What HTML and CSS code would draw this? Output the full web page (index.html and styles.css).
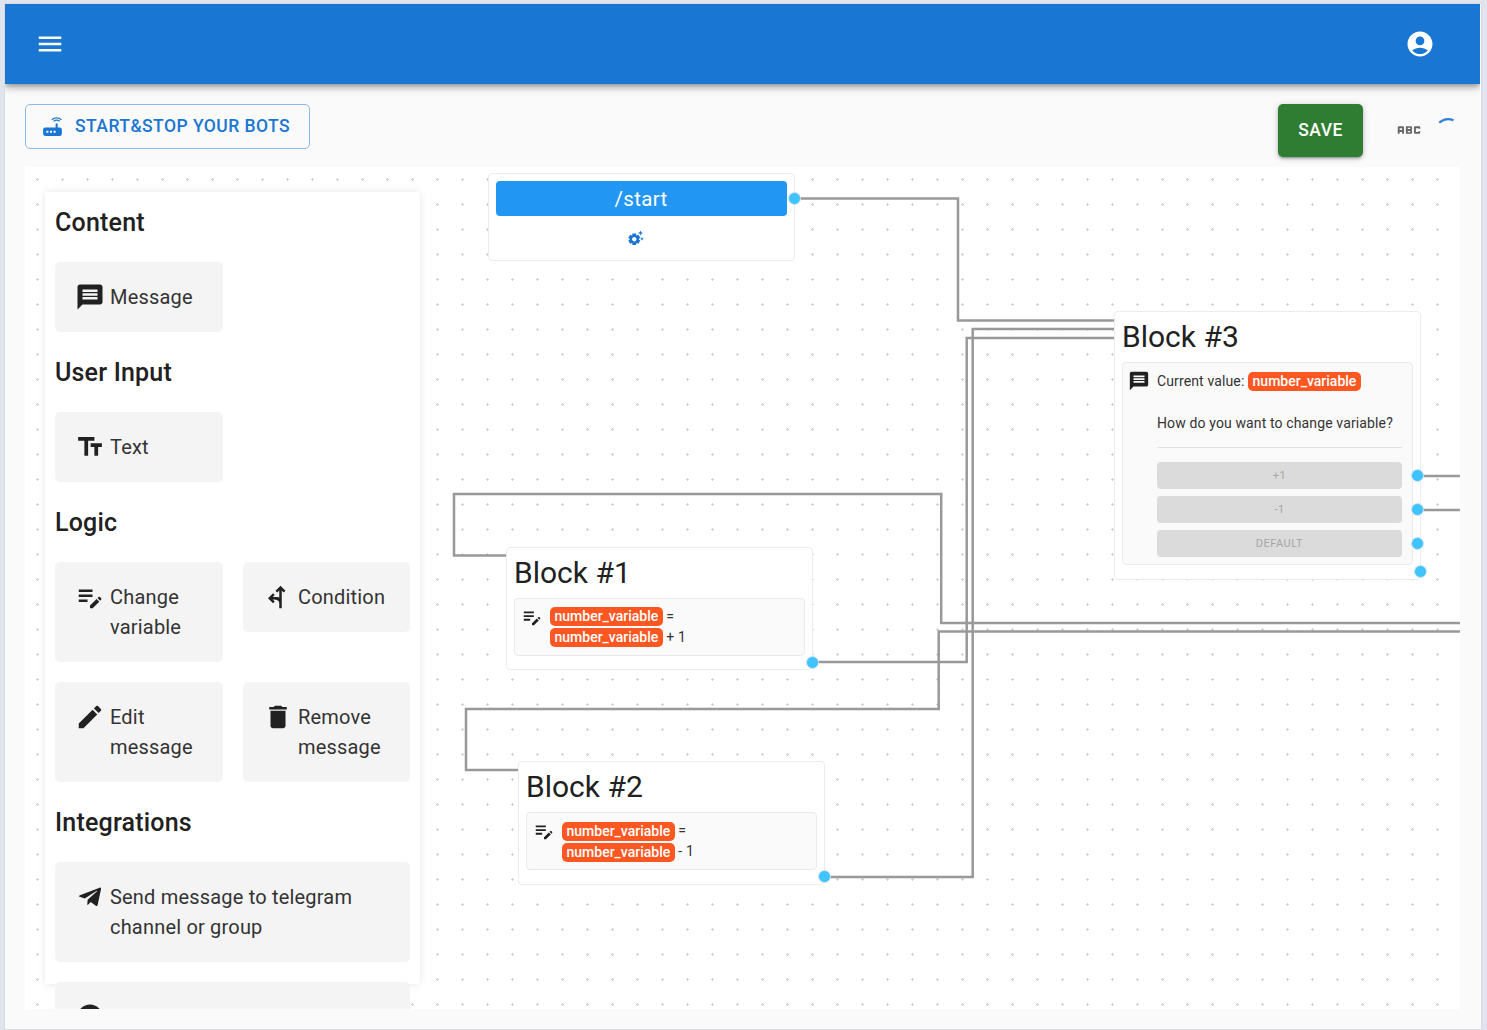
FILE: index.html
```html
<!DOCTYPE html>
<html lang="en">
<head>
<meta charset="utf-8">
<title>Bot editor</title>
<link rel="stylesheet" href="styles.css">
</head>
<body>
<svg class="sprite" aria-hidden="true">
  <symbol id="chat" viewBox="0 0 24 24"><path d="M20 2H4c-1.1 0-1.99.9-1.99 2L2 22l4-4h14c1.1 0 2-.9 2-2V4c0-1.1-.9-2-2-2zm-2 12H6v-2h12v2zm0-3H6V9h12v2zm0-3H6V6h12v2z"/></symbol>
  <symbol id="note" viewBox="0 0 24 24"><path d="M3 10h11v2H3v-2zm0-2h11V6H3v2zm0 8h7v-2H3v2zm15.01-3.13.71-.71c.39-.39 1.02-.39 1.41 0l.71.71c.39.39.39 1.02 0 1.41l-.71.71-2.12-2.12zm-.71.71-5.3 5.3V21h2.12l5.3-5.3-2.12-2.12z"/></symbol>
</svg>
<div class="app">
  <header class="appbar">
    <svg class="icon" viewBox="0 0 24 24"><path d="M3 18h18v-2H3v2zm0-5h18v-2H3v2zm0-7v2h18V6H3z"/></svg>
    <svg class="icon" viewBox="0 0 24 24"><path d="M12 2C6.48 2 2 6.48 2 12s4.48 10 10 10 10-4.48 10-10S17.52 2 12 2zm0 4c1.93 0 3.5 1.57 3.5 3.5S13.93 13 12 13s-3.5-1.57-3.5-3.5S10.07 6 12 6zm0 14c-2.03 0-4.43-.82-6.14-2.88C7.55 15.8 9.68 15 12 15s4.45.8 6.14 2.12C16.43 19.18 14.03 20 12 20z"/></svg>
  </header>
  <div class="toolbar">
    <button class="bots">
      <svg class="icon-router" viewBox="0 0 24 24"><path d="M20.2 5.9l.8-.8C19.6 3.7 17.8 3 16 3s-3.6.7-5 2.1l.8.8C13 4.8 14.5 4.2 16 4.2s3 .6 4.2 1.7zm-.9.8c-.9-.9-2.1-1.4-3.3-1.4s-2.4.5-3.3 1.4l.8.8c.7-.7 1.6-1 2.5-1 .9 0 1.8.3 2.5 1l.8-.8zM19 13h-2V9h-2v4H5c-1.1 0-2 .9-2 2v4c0 1.1.9 2 2 2h14c1.1 0 2-.9 2-2v-4c0-1.1-.9-2-2-2zM8 18H6v-2h2v2zm3.5 0h-2v-2h2v2zm3.5 0h-2v-2h2v2z"/></svg>
      <span>START&amp;STOP YOUR BOTS</span>
    </button>
    <div class="actions">
      <button class="save">SAVE</button>
      <svg class="icon abc" viewBox="0 0 24 24"><path fill-rule="evenodd" d="M21 11h-1.5v-.5h-2v3h2V13H21v1c0 .55-.45 1-1 1h-3c-.55 0-1-.45-1-1v-4c0-.55.45-1 1-1h3c.55 0 1 .45 1 1zM8 10v5H6.5v-1.5h-2V15H3v-5c0-.55.45-1 1-1h3c.55 0 1 .45 1 1zm-1.5.5h-2V12h2zM9.5 9h4c.55 0 1 .45 1 1v1c0 .55-.45 1-1 1 .55 0 1 .45 1 1v1c0 .55-.45 1-1 1h-4zm1.5 1.25v1h2v-1zm0 2.5v1h2v-1z"/></svg>
      <svg class="spinner" viewBox="0 0 30 30"><path d="M7.200 8.700Q14 2.900 21.500 6.300"/></svg>
    </div>
  </div>

  <main class="canvas">
    <svg class="edges" width="1435" height="842" viewBox="25 167 1435 842">
      <defs><pattern id="grid" x="25" y="167" width="25" height="25" patternUnits="userSpaceOnUse"><path d="M12 11h1v1h1v1h-1v1h-1v-1h-1v-1h1z"/></pattern></defs>
      <rect class="dots" x="25" y="167" width="1435" height="842" fill="url(#grid)"/>
      <path d="M795 198.500H958V320.500H1115"/>
      <path d="M813 662H966.700V338H1115"/>
      <path d="M825 877H972.700V329H1115"/>
      <path d="M1460 623H941.200V494H454V555.500H508"/>
      <path d="M1460 631.500H938.700V709H466V770H520"/>
      <path d="M1417 476H1460M1417 510H1460"/>
    </svg>

    <section class="node node-start">
      <div class="command">/start</div>
      <svg class="gear" viewBox="0 0 24 24"><path d="M17.41 6.59 15 5.500l2.410-1.090L18.500 2l1.090 2.410L22 5.500l-2.410 1.090L18.500 9l-1.090-2.410zm3.870 6.130L20.500 11l-.78 1.720-1.720.78 1.720.78.78 1.720.78-1.720L23 13.500l-1.720-.78zm-5.040 1.650 1.940 1.470-2.500 4.330-2.240-.94c-.2.13-.42.26-.64.37l-.3 2.400h-5l-.3-2.410c-.22-.11-.43-.23-.64-.37l-2.240.94-2.500-4.330 1.940-1.470c-.01-.11-.01-.24-.01-.36s0-.25.01-.37l-1.940-1.470 2.500-4.330 2.240.94c.2-.13.42-.26.64-.37L7.500 6h5l.3 2.410c.22.11.43.23.64.37l2.240-.94 2.500 4.330-1.940 1.470c.01.12.01.24.01.37s0 .24-.01.36zM13 14c0-1.660-1.340-3-3-3s-3 1.340-3 3 1.340 3 3 3 3-1.340 3-3z"/></svg>
      <i class="port port-start"></i>
    </section>

    <section class="node node-1">
      <h2>Block #1</h2>
      <div class="step">
        <svg class="step-icon"><use href="#note"/></svg>
        <div class="step-body"><div><span class="chip">number_variable</span> =</div><div><span class="chip">number_variable</span> + 1</div></div>
      </div>
      <i class="port port-end"></i>
    </section>

    <section class="node node-2">
      <h2>Block #2</h2>
      <div class="step">
        <svg class="step-icon"><use href="#note"/></svg>
        <div class="step-body"><div><span class="chip">number_variable</span> =</div><div><span class="chip">number_variable</span> - 1</div></div>
      </div>
      <i class="port port-end"></i>
    </section>

    <section class="node node-3">
      <h2>Block #3</h2>
      <div class="step">
        <svg class="step-icon"><use href="#chat"/></svg>
        <div class="step-body">
          <div>Current value: <span class="chip">number_variable</span></div>
          <p>How do you want to change variable?</p>
          <div class="options">
            <div class="option">+1<i class="port"></i></div>
            <div class="option">-1<i class="port"></i></div>
            <div class="option">DEFAULT<i class="port"></i></div>
          </div>
        </div>
      </div>
      <i class="port port-end"></i>
    </section>

    <aside class="palette">
      <h3>Content</h3>
      <div class="tiles"><div class="tile"><svg class="icon"><use href="#chat"/></svg><span>Message</span></div></div>
      <h3>User Input</h3>
      <div class="tiles"><div class="tile"><svg class="icon" viewBox="0 0 24 24"><path d="M2.500 4v3h5v12h3V7h5V4h-13zm19 5h-9v3h3v7h3v-7h3V9z"/></svg><span>Text</span></div></div>
      <h3>Logic</h3>
      <div class="tiles">
        <div class="tile"><svg class="icon"><use href="#note"/></svg><span>Change variable</span></div>
        <div class="tile"><svg class="icon" viewBox="0 0 24 24"><path d="M14 3l-4 4 1.410 1.410L13 6.830v5.500c-1.100-.3-2.800-.35-5.170-.33L9.410 10.410 8 9l-4 4 4 4 1.410-1.410L7.830 14c3.700 0 5.170.9 5.170 3.100V21h2V6.830l1.590 1.580L18 7z"/></svg><span>Condition</span></div>
        <div class="tile"><svg class="icon" viewBox="0 0 24 24"><path d="M3 17.250V21h3.750L17.810 9.940l-3.750-3.750L3 17.250zM20.710 7.040c.39-.39.39-1.020 0-1.410l-2.340-2.340a1 1 0 0 0-1.410 0l-1.830 1.830 3.750 3.750 1.830-1.830z"/></svg><span>Edit message</span></div>
        <div class="tile"><svg class="icon" viewBox="0 0 24 24"><path d="M6 19c0 1.100.9 2 2 2h8c1.100 0 2-.9 2-2V7H6v12zM19 4h-3.500l-1-1h-5l-1 1H5v2h14V4z"/></svg><span>Remove message</span></div>
      </div>
      <h3>Integrations</h3>
      <div class="tiles">
        <div class="tile wide"><svg class="icon" viewBox="-80 -48 608 608"><path d="M446.700 98.600l-67.600 318.800c-5.100 22.500-18.400 28.100-37.300 17.500l-103-75.900-49.700 47.800c-5.500 5.500-10.100 10.100-20.700 10.100l7.400-104.900 190.900-172.500c8.300-7.400-1.800-11.500-12.900-4.100L117.800 284 16.200 252.200c-22.100-6.900-22.500-22.100 4.600-32.700L418.200 66.400c18.400-6.900 34.500 4.100 28.500 32.200z"/></svg><span>Send message to telegram channel or group</span></div>
        <div class="tile wide"><svg class="icon" viewBox="0 0 24 24"><circle cx="12" cy="11.700" r="9.800"/></svg></div>
      </div>
    </aside>
  </main>
</div>
</body>
</html>
```
FILE: styles.css
```css
* { box-sizing: border-box; }
body {
  margin: 0;
  height: 1030px;
  padding: 4px 6px 1px 5px;
  overflow: hidden;
  background: linear-gradient(90deg, #e0e4ed, #e3e3ef);
  font-family: Roboto, "Liberation Sans", sans-serif;
  color: #212121;
}
h2, h3, p { margin: 0; font-weight: 400; }
button { font: inherit; }
svg { display: block; flex: none; fill: currentColor; }
.sprite { position: absolute; width: 0; height: 0; }
.icon { width: 30px; height: 30px; }

.app {
  height: 1025px;
  padding-right: 1px;
  background: #fafafa;
  box-shadow: 0 0 0 1px #d9dade;
}
.appbar {
  display: flex;
  justify-content: space-between;
  align-items: center;
  width: 1475px;
  height: 80px;
  padding: 0 45px 0 30px;
  color: #fff;
  background: #1976d2;
  box-shadow: 0 2px 5px -1px rgba(0,0,0,.3), 0 5px 6px rgba(0,0,0,.14), 0 1px 12px rgba(0,0,0,.12);
  clip-path: inset(0 0 -20px 0);
}
.toolbar {
  display: flex;
  justify-content: space-between;
  align-items: flex-start;
  height: 83px;
  padding: 20px 18px 0 20px;
}
.bots {
  display: flex;
  align-items: center;
  gap: 10px;
  width: 285px;
  height: 45px;
  padding: 0 0 1px 14px;
  border: 1px solid #8cbae8;
  border-radius: 5px;
  background: transparent;
  color: #1976d2;
  font-size: 17.5px;
  font-weight: 500;
  letter-spacing: .45px;
  white-space: nowrap;
}
.icon-router { width: 25px; height: 25px; }
.actions { display: flex; }
.save {
  width: 85px;
  height: 53px;
  padding: 0 0 2px;
  border: 0;
  border-radius: 5px;
  background: #2e7d32;
  color: #fff;
  font-size: 17.5px;
  font-weight: 500;
  letter-spacing: .45px;
  box-shadow: 0 3px 2px -2px rgba(0,0,0,.2), 0 2px 3px rgba(0,0,0,.14), 0 1px 6px rgba(0,0,0,.2);
}
.abc { margin: 11px 0 0 31px; color: #666; }
.spinner { width: 30px; height: 30px; margin: 10px 0 0 8px; fill: none; stroke: #2b80d5; stroke-width: 2.2; }

.canvas {
  position: relative;
  width: 1435px;
  height: 842px;
  margin-left: 20px;
  overflow: hidden;
  background: #fff;
}
.edges { position: absolute; inset: 0; fill: none; stroke: #999; stroke-width: 2.5; }
.edges pattern path { fill: #d2d2d2; stroke: none; }
.dots { stroke: none; }

.palette {
  position: absolute;
  left: 20px;
  top: 25px;
  width: 375px;
  height: 792px;
  padding: 10px;
  background: #fff;
  box-shadow: 0 0 8px rgba(0,0,0,.1);
}
.palette h3 {
  height: 40px;
  margin-bottom: 20px;
  line-height: 42px;
  font-size: 25px;
  font-weight: 500;
  letter-spacing: .2px;
}
.tiles { display: grid; grid-template-columns: 168px 167px; align-items: start; gap: 20px; margin-bottom: 20px; }
.tile {
  display: flex;
  gap: 5px;
  padding: 20px;
  border-radius: 5px;
  background: #f4f4f4;
  font-size: 20px;
  line-height: 30px;
  letter-spacing: .19px;
}
.tile span { color: #333; }
.wide { grid-column: span 2; }

.node {
  position: absolute;
  width: 307px;
  padding: 7px 7px 13px;
  border: 1px solid #ececec;
  border-radius: 4px;
  background: #fff;
}
.node-start { left: 463px; top: 6px; height: 88px; }
.node-1 { left: 481px; top: 380px; }
.node-2 { left: 493px; top: 594px; padding-bottom: 14px; }
.node-3 { left: 1089px; top: 144px; padding-bottom: 14px; }
.command {
  height: 35px;
  padding-right: 1px;
  border-radius: 4px;
  background: #2196f3;
  color: #fff;
  font-size: 20.5px;
  line-height: 36px;
  letter-spacing: .3px;
  text-align: center;
}
.gear { width: 17.5px; height: 17.5px; margin: 12.5px auto 0 131px; color: #1976d2; }
.node h2 { height: 43px; font-size: 30px; line-height: 36px; }
.step {
  display: flex;
  gap: 7px;
  padding: 7px 10px 7px 6px;
  border: 1px solid #eaeaea;
  border-radius: 4px;
  background: #fafafa;
  font-size: 14px;
  line-height: 21px;
  letter-spacing: .13px;
}
.node-3 .step { padding: 8px 10px 7px 5px; }
.step-icon { width: 22px; height: 22px; }
.node-3 .step-icon { margin-top: -1px; }
.step-body { flex: 1; color: #333; white-space: nowrap; }
.chip {
  display: inline-block;
  height: 19px;
  padding: 0 4.5px;
  border-radius: 5px;
  background: #ff5722;
  color: #fff;
  font-weight: 500;
  line-height: 19px;
  letter-spacing: 0;
  vertical-align: middle;
  position: relative;
  top: -1px;
}
.node-2 .chip { top: 0; }
.step-body p { margin-top: 21px; padding-bottom: 13px; border-bottom: 1px solid #e2e2e2; }
.options { display: flex; flex-direction: column; gap: 7px; margin-top: 14px; }
.option {
  position: relative;
  height: 27px;
  border-radius: 4px;
  background: #dbdbdb;
  color: #a6a6a6;
  font-size: 11px;
  line-height: 27px;
  letter-spacing: .5px;
  text-align: center;
}
.port {
  position: absolute;
  width: 13px;
  height: 13px;
  border: 1px solid #d6e4ec;
  border-radius: 50%;
  background: #40c4ff;
}
.option .port { right: -22px; top: 7px; }
.port-start { right: -7px; top: 18px; }
.port-end { right: -7.3px; bottom: .5px; }
.node-2 .port-end { right: -7px; bottom: 1px; }
.node-3 .port-end { right: -7px; bottom: 1px; }
```
